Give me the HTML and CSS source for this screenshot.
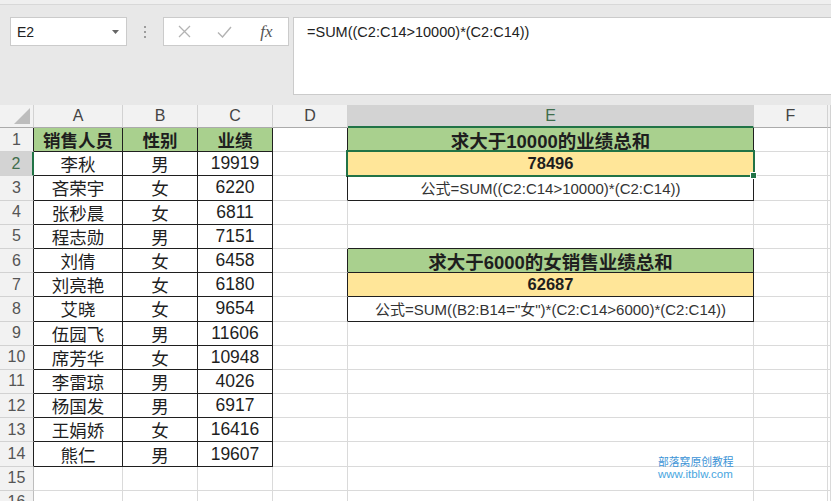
FILE: index.html
```html
<!DOCTYPE html>
<html lang="zh">
<head>
<meta charset="utf-8">
<title>Excel</title>
<link rel="stylesheet" href="styles.css">
</head>
<body>
<div class="app">
  <div class="topstrip"></div>
  <div class="ribbon">
    <div class="left">
      <div class="namebox"><span>E2</span><svg width="7" height="4" viewBox="0 0 7 4"><polygon points="0,0 7,0 3.5,4" fill="#666"/></svg></div>
      <div class="dots"><i></i><i></i><i></i></div>
      <div class="btnbox">
        <span class="btn"><svg width="13" height="13" viewBox="0 0 13 13"><path d="M1 1 L12 12 M12 1 L1 12" stroke="#b3b3b3" stroke-width="1.3" fill="none"/></svg></span>
        <span class="btn"><svg width="15" height="12" viewBox="0 0 15 12"><path d="M1 6.5 L5.5 11 L14 1" stroke="#b3b3b3" stroke-width="1.4" fill="none"/></svg></span>
        <span class="btn fx">fx</span>
      </div>
    </div>
    <div class="fbar">=SUM((C2:C14&gt;10000)*(C2:C14))</div>
  </div>

  <div class="sheet">
    <div class="ch corner"><svg width="16" height="16" viewBox="0 0 16 16"><polygon points="16,0 16,16 0,16" fill="#bdbdbd"/></svg></div>
    <div class="ch">A</div><div class="ch">B</div><div class="ch">C</div><div class="ch">D</div><div class="ch sel">E</div><div class="ch">F</div><div class="ch last"></div>

    <div class="rh tl">1</div><div class="c t g b">销售人员</div><div class="c t g b">性别</div><div class="c t g b">业绩</div><div class="c tl"></div><div class="c t g b title">求大于10000的业绩总和</div><div class="c"></div><div class="c"></div>
    <div class="rh rsel">2</div><div class="c t">李秋</div><div class="c t">男</div><div class="c t">19919</div><div class="c tl"></div><div class="c t y b num cursor">78496</div><div class="c"></div><div class="c"></div>
    <div class="rh tl">3</div><div class="c t">吝荣宇</div><div class="c t">女</div><div class="c t">6220</div><div class="c tl"></div><div class="c t f">公式=SUM((C2:C14&gt;10000)*(C2:C14))</div><div class="c"></div><div class="c"></div>
    <div class="rh tl">4</div><div class="c t">张秒晨</div><div class="c t">女</div><div class="c t">6811</div><div class="c"></div><div class="c"></div><div class="c"></div><div class="c"></div>
    <div class="rh tl">5</div><div class="c t">程志勋</div><div class="c t">男</div><div class="c t">7151</div><div class="c"></div><div class="c tt"></div><div class="c"></div><div class="c"></div>
    <div class="rh tl">6</div><div class="c t">刘倩</div><div class="c t">女</div><div class="c t">6458</div><div class="c tl"></div><div class="c t g b title">求大于6000的女销售业绩总和</div><div class="c"></div><div class="c"></div>
    <div class="rh tl">7</div><div class="c t">刘亮艳</div><div class="c t">女</div><div class="c t">6180</div><div class="c tl"></div><div class="c t y b num">62687</div><div class="c"></div><div class="c"></div>
    <div class="rh tl">8</div><div class="c t">艾晓</div><div class="c t">女</div><div class="c t">9654</div><div class="c tl"></div><div class="c t f">公式=SUM((B2:B14="女")*(C2:C14&gt;6000)*(C2:C14))</div><div class="c"></div><div class="c"></div>
    <div class="rh tl">9</div><div class="c t">伍园飞</div><div class="c t">男</div><div class="c t">11606</div><div class="c"></div><div class="c"></div><div class="c"></div><div class="c"></div>
    <div class="rh tl">10</div><div class="c t">席芳华</div><div class="c t">女</div><div class="c t">10948</div><div class="c"></div><div class="c"></div><div class="c"></div><div class="c"></div>
    <div class="rh tl">11</div><div class="c t">李雷琼</div><div class="c t">男</div><div class="c t">4026</div><div class="c"></div><div class="c"></div><div class="c"></div><div class="c"></div>
    <div class="rh tl">12</div><div class="c t">杨国发</div><div class="c t">男</div><div class="c t">6917</div><div class="c"></div><div class="c"></div><div class="c"></div><div class="c"></div>
    <div class="rh tl">13</div><div class="c t">王娟娇</div><div class="c t">女</div><div class="c t">16416</div><div class="c"></div><div class="c"></div><div class="c"></div><div class="c"></div>
    <div class="rh tl">14</div><div class="c t">熊仁</div><div class="c t">男</div><div class="c t">19607</div><div class="c"></div><div class="c"></div><div class="c"></div><div class="c"></div>
    <div class="rh">15</div><div class="c"></div><div class="c"></div><div class="c"></div><div class="c"></div><div class="c"></div><div class="c"></div><div class="c"></div>
    <div class="rh">16</div><div class="c"></div><div class="c"></div><div class="c"></div><div class="c"></div><div class="c"></div><div class="c"></div><div class="c"></div>
  </div>

  <div class="watermark">
    <div class="wm1">部落窝原创教程</div>
    <div class="wm2">www.itblw.com</div>
  </div>
</div>
</body>
</html>
```

FILE: styles.css
```css
html, body {
  margin: 0;
  padding: 0;
}
body {
  width: 831px;
  height: 501px;
  overflow: hidden;
  background: #fff;
  font-family: "Liberation Sans", "Noto Sans CJK SC", sans-serif;
  color: #1e1e1e;
}
.app {
  position: relative;
  width: 831px;
  height: 501px;
  overflow: hidden;
}
.topstrip {
  height: 4px;
  background: #efefef;
  border-bottom: 1px solid #d8d8d8;
}
.ribbon {
  height: 100px;
  box-sizing: border-box;
  padding-top: 12px;
  background: #e8e8e8;
  display: flex;
  align-items: flex-start;
}
.left {
  width: 293px;
  flex: none;
  display: flex;
  align-items: flex-start;
}
.namebox {
  margin-left: 10px;
  width: 117px;
  height: 29px;
  box-sizing: border-box;
  border: 1px solid #cbcbcb;
  background: #fff;
  display: flex;
  align-items: center;
  justify-content: space-between;
  padding: 0 7px 0 6px;
  font-size: 14px;
  color: #222;
}
.dots {
  width: 36px;
  height: 29px;
  display: flex;
  flex-direction: column;
  align-items: center;
  justify-content: center;
  gap: 3px;
}
.dots i {
  display: block;
  width: 2px;
  height: 2px;
  background: #9c9c9c;
}
.btnbox {
  width: 126px;
  height: 29px;
  box-sizing: border-box;
  border: 1px solid #cbcbcb;
  background: #fff;
  display: flex;
  align-items: center;
}
.btn {
  width: 41px;
  display: flex;
  align-items: center;
  justify-content: center;
}
.btn.fx {
  width: 44px;
  font-family: "Liberation Serif", serif;
  font-style: italic;
  font-size: 17px;
  color: #555;
}
.fbar {
  flex: 1;
  height: 78px;
  box-sizing: border-box;
  border: 1px solid #cbcbcb;
  border-right: none;
  background: #fff;
  padding: 6px 0 0 13px;
  font-size: 14.5px;
  color: #222;
  white-space: nowrap;
}

.sheet {
  display: grid;
  grid-template-columns: 34px 89px 75px 75px 75px 406px 74px 1fr;
  grid-template-rows: 23px repeat(16, 24.2px);
}
.ch {
  box-sizing: border-box;
  background: #f2f2f2;
  border-right: 1px solid #d2d2d2;
  border-bottom: 1px solid #ababab;
  display: flex;
  align-items: center;
  justify-content: center;
  font-size: 16px;
  color: #444;
}
.ch.corner {
  justify-content: flex-end;
  align-items: flex-end;
  padding: 0 3px 3px 0;
}
.ch.sel {
  background: #d3d3d3;
  border-bottom: 2px solid #217346;
  color: #3f6d4c;
}
.rh {
  box-sizing: border-box;
  background: #f2f2f2;
  border-right: 1px solid #bdbdbd;
  border-bottom: 1px solid #d2d2d2;
  display: flex;
  align-items: center;
  justify-content: center;
  font-size: 16px;
  color: #555;
}
.rh.rsel {
  background: #d3d3d3;
  border-right: 2px solid #217346;
  color: #3f6d4c;
}
.c {
  box-sizing: border-box;
  border-right: 1px solid #dadada;
  border-bottom: 1px solid #dadada;
  display: flex;
  align-items: center;
  justify-content: center;
  font-size: 17.5px;
  white-space: nowrap;
  position: relative;
}
.c.t {
  border-right-color: #1f1f1f;
  border-bottom-color: #1f1f1f;
}
.tl {
  border-right-color: #1f1f1f;
}
.c.tt {
  border-bottom-color: #1f1f1f;
}
.g {
  background: #a9d08e;
}
.y {
  background: #ffe699;
}
.b {
  font-weight: bold;
}
.title {
  font-size: 18.5px;
}
.num {
  font-size: 16.5px;
}
.f {
  font-size: 15px;
  color: #333;
}
.cursor::after {
  content: "";
  position: absolute;
  left: -2px;
  top: -2px;
  right: -2px;
  bottom: -2px;
  border: 2px solid #217346;
}
.cursor::before {
  content: "";
  position: absolute;
  right: -4px;
  bottom: -4px;
  width: 5px;
  height: 5px;
  background: #217346;
  border: 1px solid #fff;
  z-index: 2;
}
.watermark {
  position: absolute;
  left: 658px;
  top: 456px;
  line-height: 12px;
}
.wm1 {
  font-size: 10.8px;
  color: #3b93d6;
}
.wm2 {
  font-size: 11.5px;
  color: #49a6e0;
}
```
